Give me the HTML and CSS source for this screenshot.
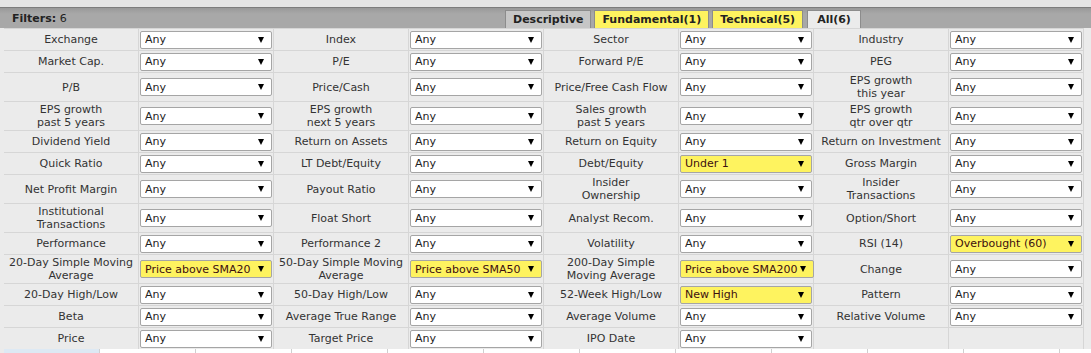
FILE: index.html
```html
<!DOCTYPE html>
<html lang="en">
<head>
  <meta charset="utf-8" />
  <title>Screener Filters</title>
  <link rel="stylesheet" href="styles.css">
</head>
<body>
  <div class="topstrip"></div>
  <div class="filters-head">
    <div class="count"><b>Filters:</b> 6</div>
    <div class="tabs">
      <div class="tab">Descriptive</div>
      <div class="tab has-filter">Fundamental(1)</div>
      <div class="tab has-filter">Technical(5)</div>
      <div class="tab current">All(6)</div>
    </div>
  </div>

  <div class="screener">
    <!-- row 1 -->
    <div class="lbl">Exchange</div>
    <div class="val"><div class="sel"><span>Any</span><i class="arr"></i></div></div>
    <div class="lbl">Index</div>
    <div class="val"><div class="sel"><span>Any</span><i class="arr"></i></div></div>
    <div class="lbl">Sector</div>
    <div class="val"><div class="sel"><span>Any</span><i class="arr"></i></div></div>
    <div class="lbl">Industry</div>
    <div class="val"><div class="sel"><span>Any</span><i class="arr"></i></div></div>

    <!-- row 2 -->
    <div class="lbl">Market Cap.</div>
    <div class="val"><div class="sel"><span>Any</span><i class="arr"></i></div></div>
    <div class="lbl">P/E</div>
    <div class="val"><div class="sel"><span>Any</span><i class="arr"></i></div></div>
    <div class="lbl">Forward P/E</div>
    <div class="val"><div class="sel"><span>Any</span><i class="arr"></i></div></div>
    <div class="lbl">PEG</div>
    <div class="val"><div class="sel"><span>Any</span><i class="arr"></i></div></div>

    <!-- row 3 -->
    <div class="lbl">P/B</div>
    <div class="val"><div class="sel"><span>Any</span><i class="arr"></i></div></div>
    <div class="lbl">Price/Cash</div>
    <div class="val"><div class="sel"><span>Any</span><i class="arr"></i></div></div>
    <div class="lbl">Price/Free Cash Flow</div>
    <div class="val"><div class="sel"><span>Any</span><i class="arr"></i></div></div>
    <div class="lbl">EPS growth<br>this year</div>
    <div class="val"><div class="sel"><span>Any</span><i class="arr"></i></div></div>

    <!-- row 4 -->
    <div class="lbl">EPS growth<br>past 5 years</div>
    <div class="val"><div class="sel"><span>Any</span><i class="arr"></i></div></div>
    <div class="lbl">EPS growth<br>next 5 years</div>
    <div class="val"><div class="sel"><span>Any</span><i class="arr"></i></div></div>
    <div class="lbl">Sales growth<br>past 5 years</div>
    <div class="val"><div class="sel"><span>Any</span><i class="arr"></i></div></div>
    <div class="lbl">EPS growth<br>qtr over qtr</div>
    <div class="val"><div class="sel"><span>Any</span><i class="arr"></i></div></div>

    <!-- row 5 -->
    <div class="lbl">Dividend Yield</div>
    <div class="val"><div class="sel"><span>Any</span><i class="arr"></i></div></div>
    <div class="lbl">Return on Assets</div>
    <div class="val"><div class="sel"><span>Any</span><i class="arr"></i></div></div>
    <div class="lbl">Return on Equity</div>
    <div class="val"><div class="sel"><span>Any</span><i class="arr"></i></div></div>
    <div class="lbl">Return on Investment</div>
    <div class="val"><div class="sel"><span>Any</span><i class="arr"></i></div></div>

    <!-- row 6 -->
    <div class="lbl">Quick Ratio</div>
    <div class="val"><div class="sel"><span>Any</span><i class="arr"></i></div></div>
    <div class="lbl">LT Debt/Equity</div>
    <div class="val"><div class="sel"><span>Any</span><i class="arr"></i></div></div>
    <div class="lbl">Debt/Equity</div>
    <div class="val"><div class="sel on"><span>Under 1</span><i class="arr"></i></div></div>
    <div class="lbl">Gross Margin</div>
    <div class="val"><div class="sel"><span>Any</span><i class="arr"></i></div></div>

    <!-- row 7 -->
    <div class="lbl">Net Profit Margin</div>
    <div class="val"><div class="sel"><span>Any</span><i class="arr"></i></div></div>
    <div class="lbl">Payout Ratio</div>
    <div class="val"><div class="sel"><span>Any</span><i class="arr"></i></div></div>
    <div class="lbl">Insider<br>Ownership</div>
    <div class="val"><div class="sel"><span>Any</span><i class="arr"></i></div></div>
    <div class="lbl">Insider<br>Transactions</div>
    <div class="val"><div class="sel"><span>Any</span><i class="arr"></i></div></div>

    <!-- row 8 -->
    <div class="lbl">Institutional<br>Transactions</div>
    <div class="val"><div class="sel"><span>Any</span><i class="arr"></i></div></div>
    <div class="lbl">Float Short</div>
    <div class="val"><div class="sel"><span>Any</span><i class="arr"></i></div></div>
    <div class="lbl">Analyst Recom.</div>
    <div class="val"><div class="sel"><span>Any</span><i class="arr"></i></div></div>
    <div class="lbl">Option/Short</div>
    <div class="val"><div class="sel"><span>Any</span><i class="arr"></i></div></div>

    <!-- row 9 -->
    <div class="lbl">Performance</div>
    <div class="val"><div class="sel"><span>Any</span><i class="arr"></i></div></div>
    <div class="lbl">Performance 2</div>
    <div class="val"><div class="sel"><span>Any</span><i class="arr"></i></div></div>
    <div class="lbl">Volatility</div>
    <div class="val"><div class="sel"><span>Any</span><i class="arr"></i></div></div>
    <div class="lbl">RSI (14)</div>
    <div class="val"><div class="sel on"><span>Overbought (60)</span><i class="arr"></i></div></div>

    <!-- row 10 -->
    <div class="lbl">20-Day Simple Moving<br>Average</div>
    <div class="val"><div class="sel on"><span>Price above SMA20</span><i class="arr"></i></div></div>
    <div class="lbl">50-Day Simple Moving<br>Average</div>
    <div class="val"><div class="sel on"><span>Price above SMA50</span><i class="arr"></i></div></div>
    <div class="lbl">200-Day Simple<br>Moving Average</div>
    <div class="val"><div class="sel on"><span>Price above SMA200</span><i class="arr"></i></div></div>
    <div class="lbl">Change</div>
    <div class="val"><div class="sel"><span>Any</span><i class="arr"></i></div></div>

    <!-- row 11 -->
    <div class="lbl">20-Day High/Low</div>
    <div class="val"><div class="sel"><span>Any</span><i class="arr"></i></div></div>
    <div class="lbl">50-Day High/Low</div>
    <div class="val"><div class="sel"><span>Any</span><i class="arr"></i></div></div>
    <div class="lbl">52-Week High/Low</div>
    <div class="val"><div class="sel on"><span>New High</span><i class="arr"></i></div></div>
    <div class="lbl">Pattern</div>
    <div class="val"><div class="sel"><span>Any</span><i class="arr"></i></div></div>

    <!-- row 12 -->
    <div class="lbl">Beta</div>
    <div class="val"><div class="sel"><span>Any</span><i class="arr"></i></div></div>
    <div class="lbl">Average True Range</div>
    <div class="val"><div class="sel"><span>Any</span><i class="arr"></i></div></div>
    <div class="lbl">Average Volume</div>
    <div class="val"><div class="sel"><span>Any</span><i class="arr"></i></div></div>
    <div class="lbl">Relative Volume</div>
    <div class="val"><div class="sel"><span>Any</span><i class="arr"></i></div></div>

    <!-- row 13 -->
    <div class="lbl">Price</div>
    <div class="val"><div class="sel"><span>Any</span><i class="arr"></i></div></div>
    <div class="lbl">Target Price</div>
    <div class="val"><div class="sel"><span>Any</span><i class="arr"></i></div></div>
    <div class="lbl">IPO Date</div>
    <div class="val"><div class="sel"><span>Any</span><i class="arr"></i></div></div>
    <div class="lbl"></div>
    <div class="val"></div>
  </div>

  <div class="subtabs">
    <div class="st cur"></div>
    <div class="st"></div>
    <div class="st"></div>
    <div class="st"></div>
    <div class="st"></div>
    <div class="st"></div>
    <div class="st"></div>
    <div class="st"></div>
    <div class="st"></div>
    <div class="st"></div>
    <div class="st"></div>
  </div>
</body>
</html>
```

FILE: styles.css
```css
body {
  margin: 0;
  background: #ebebeb;
  font-family: "DejaVu Sans", Verdana, sans-serif;
  font-size: 11px;
  color: #333;
}
.topstrip {
  height: 7px;
  background: #e5e5e5;
}
.filters-head {
  display: flex;
  align-items: flex-end;
  height: 20px;
  border-top: 1px solid #7d7d7d;
  background: linear-gradient(#999, #a8a8a8 30%);
}
.count {
  flex: 0 0 505px;
  box-sizing: border-box;
  padding-left: 12px;
  align-self: center;
  color: #222;
}
.tabs {
  display: flex;
  gap: 3px;
}
.tab {
  height: 18px;
  line-height: 18px;
  padding: 0 7px;
  box-sizing: border-box;
  border: 1px solid #8c8c8c;
  border-bottom: none;
  background: #c6c6c6;
  color: #222;
  font-weight: bold;
}
.tab.has-filter {
  background: #fef35f;
}
.tab.current {
  margin-left: 1px;
  background: #ebebeb;
  padding: 0 9px;
}
.screener {
  display: grid;
  grid-template-columns: repeat(8, 134px);
  grid-auto-rows: minmax(21px, auto);
  gap: 1px;
  width: max-content;
  margin-left: 4px;
  background: #d6d6d6;
  border-top: 1px solid #d6d6d6;
  border-right: 1px solid #d6d6d6;
}
.lbl {
  display: flex;
  align-items: center;
  justify-content: center;
  padding: 1px 0;
  text-align: center;
  line-height: 13px;
  white-space: nowrap;
  background: #ebebeb;
}
.val {
  display: flex;
  align-items: center;
  padding: 0 1px;
  background: #ebebeb;
}
.sel {
  flex: 1;
  display: flex;
  align-items: center;
  height: 18px;
  box-sizing: border-box;
  padding: 0 7px 0 4px;
  border: 1px solid #a5a5a5;
  border-radius: 2px;
  background: #fff;
  color: #222;
}
.sel span {
  flex: 1;
  overflow: hidden;
  white-space: nowrap;
}
.sel.on {
  background: #fef35f;
  color: #3d0f0f;
}
.arr {
  width: 0;
  height: 0;
  margin-left: 2px;
  border-left: 3px solid transparent;
  border-right: 3px solid transparent;
  border-top: 6px solid #000;
}
.subtabs {
  display: flex;
  margin-left: 4px;
  height: 20px;
  background: #fff;
}
.st {
  width: 95px;
  border-right: 1px solid #cfcfcf;
}
.st.cur {
  background: #dde9f4;
}
```
